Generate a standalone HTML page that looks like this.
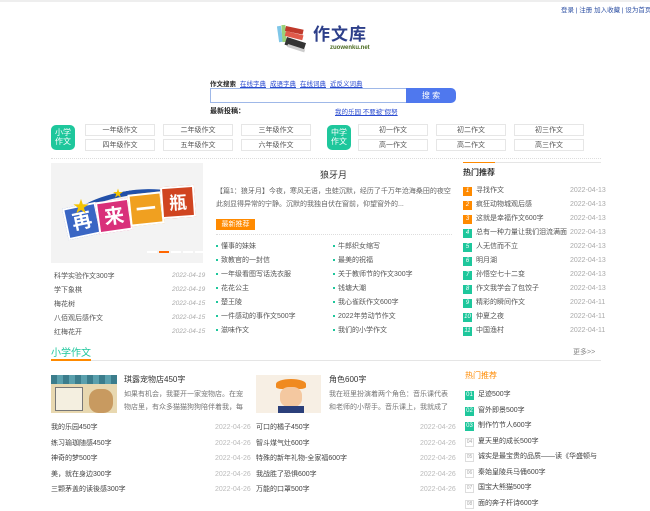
<!DOCTYPE html>
<html><head><meta charset="utf-8"><style>
*{margin:0;padding:0;box-sizing:border-box}
body{width:650px;height:500px;overflow:hidden;background:#fff;font-family:"Liberation Sans","Noto Sans CJK SC",sans-serif;font-size:7px;color:#555;position:relative}
.a{position:absolute;white-space:nowrap}
.blue{color:#2c4fa3}
.lk{color:#2a4bd0;text-decoration:underline}
.box{position:absolute;width:70px;height:12px;border:1px solid #e6e6e6;text-align:center;line-height:11px;color:#555;font-size:7px}
.badge{position:absolute;width:24px;height:25px;background:#1ec79c;border-radius:5px;color:#fff;font-size:8px;line-height:9px;text-align:center;padding-top:3px}
.dot::before{content:"";display:inline-block;width:2px;height:2px;background:#1ec79c;margin-right:3px;vertical-align:middle}
.date{color:#aaa;font-style:italic}
.num{display:inline-block;width:9px;height:9px;color:#fff;font-size:6px;text-align:center;line-height:9px;margin-right:4px;font-style:italic}
.o{background:#ff8a00}.g{background:#1ec79c}
.wn{display:inline-block;width:9px;height:9px;border:1px solid #ddd;color:#aaa;font-size:5px;text-align:center;line-height:7px;margin-right:4px}
</style></head><body>
<div class="a" style="left:0;top:0;width:650px;height:2px;background:#eee"></div>
<div class="a blue" style="left:561px;top:4px;font-size:6.5px">登录 | 注册 加入收藏 | 设为首页</div>
<!-- logo -->
<svg class="a" style="left:277px;top:24px" width="36" height="30">
<rect x="1" y="2" width="4" height="16" fill="#7ec6e8" transform="rotate(-8 3 10)"/>
<rect x="5" y="1" width="4" height="17" fill="#9bd07a" transform="rotate(-4 7 10)"/>
<rect x="9" y="2" width="18" height="5" fill="#c0392b" transform="rotate(12 9 2)"/>
<rect x="9" y="7" width="18" height="5" fill="#e05a4a" transform="rotate(14 9 7)"/>
<rect x="10" y="13" width="20" height="8" fill="#333" transform="rotate(18 10 13)"/>
<rect x="11" y="20" width="18" height="3" fill="#ccc" transform="rotate(18 11 20)"/>
</svg>
<div class="a" style="left:313px;top:26px;font-size:17px;line-height:18px;font-weight:bold;color:#2d3f8a;letter-spacing:1px">作文库</div>
<div class="a" style="left:330px;top:45px;font-size:6px;line-height:7px;color:#4a6a20;font-weight:bold">zuowenku.net</div>
<!-- search -->
<div class="a" style="left:210px;top:78px;font-size:6.5px;color:#222;font-weight:bold">作文搜索</div>
<div class="a lk" style="left:240px;top:78px;font-size:6.5px">在线字典</div>
<div class="a lk" style="left:270px;top:78px;font-size:6.5px">成语字典</div>
<div class="a lk" style="left:300px;top:78px;font-size:6.5px">在线词典</div>
<div class="a lk" style="left:330px;top:78px;font-size:6.5px">近反义词典</div>
<div class="a" style="left:210px;top:88px;width:197px;height:15px;border:1px solid #9fb8e8"></div>
<div class="a" style="left:406px;top:88px;width:50px;height:15px;background:#4f78ee;border-radius:0 5px 5px 0;color:#fff;font-size:8px;text-align:center;line-height:15px">搜 索</div>
<div class="a" style="left:210px;top:106px;font-size:7px;color:#222;font-weight:bold">最新投稿：</div>
<div class="a lk" style="left:335px;top:106px;font-size:6.5px">我的乐园 不要被"假努</div>
<!-- categories -->
<div class="badge" style="left:51px;top:125px">小学<br>作文</div>
<div class="box" style="left:85px;top:124px">一年级作文</div>
<div class="box" style="left:163px;top:124px">二年级作文</div>
<div class="box" style="left:241px;top:124px">三年级作文</div>
<div class="box" style="left:85px;top:139px">四年级作文</div>
<div class="box" style="left:163px;top:139px">五年级作文</div>
<div class="box" style="left:241px;top:139px">六年级作文</div>
<div class="badge" style="left:327px;top:125px">中学<br>作文</div>
<div class="box" style="left:358px;top:124px">初一作文</div>
<div class="box" style="left:436px;top:124px">初二作文</div>
<div class="box" style="left:514px;top:124px">初三作文</div>
<div class="box" style="left:358px;top:139px">高一作文</div>
<div class="box" style="left:436px;top:139px">高二作文</div>
<div class="box" style="left:514px;top:139px">高三作文</div>
<div class="a" style="left:51px;top:158px;width:550px;border-top:1px dotted #ddd"></div>
<!-- slide -->
<div class="a" style="left:51px;top:163px;width:152px;height:100px;background:#f3f3f3;overflow:hidden">
<div class="a" style="left:15px;top:28px;width:125px;height:50px;border-radius:50%;border-top:5px solid #2250a8;transform:rotate(-10deg)"></div>
<div class="a" style="left:14px;top:42px;width:34px;height:32px;background:#3a66c4;color:#fff;font-size:20px;font-weight:bold;text-align:center;line-height:30px;transform:rotate(-12deg);border:2px solid #fff">再</div>
<div class="a" style="left:46px;top:37px;width:34px;height:32px;background:#d9307a;color:#fff;font-size:20px;font-weight:bold;text-align:center;line-height:30px;transform:rotate(-8deg);border:2px solid #fff">来</div>
<div class="a" style="left:78px;top:30px;width:34px;height:32px;background:#f0a020;color:#fff;font-size:20px;font-weight:bold;text-align:center;line-height:30px;transform:rotate(-6deg);border:2px solid #fff">一</div>
<div class="a" style="left:110px;top:23px;width:34px;height:32px;background:#d04420;color:#fff;font-size:18px;font-weight:bold;text-align:center;line-height:30px;transform:rotate(-4deg);border:2px solid #fff">瓶</div>
<div class="a" style="left:22px;top:30px;color:#f5c400;font-size:16px">★</div>
<div class="a" style="left:62px;top:22px;color:#f5c400;font-size:10px">★</div>
<div class="a" style="left:96px;top:88px;width:10px;height:2px;background:#fff"></div>
<div class="a" style="left:108px;top:88px;width:10px;height:2px;background:#f60"></div>
<div class="a" style="left:120px;top:88px;width:10px;height:2px;background:#fff"></div>
<div class="a" style="left:132px;top:88px;width:10px;height:2px;background:#fff"></div>
<div class="a" style="left:144px;top:88px;width:8px;height:2px;background:#fff"></div>
</div>
<div class="a" style="left:54px;top:270px;line-height:14px">科学实验作文300字<br>学下象棋<br>梅花树<br>八佰观后感作文<br>红梅花开</div>
<div class="a date" style="left:172px;top:269px;line-height:14px;font-size:6.5px">2022-04-19<br>2022-04-19<br>2022-04-15<br>2022-04-15<br>2022-04-15</div>
<!-- center -->
<div class="a" style="left:320px;top:168px;font-size:9px;color:#333">狼牙月</div>
<div class="a" style="left:216px;top:185px;line-height:13px;white-space:normal;width:240px;color:#666">【篇1：狼牙月】今夜，寒风无语，虫蛙沉默，经历了千万年沧海桑田的夜空此刻显得异常的宁静。沉默的我独自伏在窗前，仰望窗外的...</div>
<div class="a" style="left:216px;top:219px;width:39px;height:11px;background:#ff8a00;color:#fff;text-align:center;line-height:11px">最新推荐</div>
<div class="a" style="left:216px;top:234px;width:236px;border-top:1px dotted #ddd"></div>
<div class="a" style="left:216px;top:240px;line-height:14px"><div class="dot">懂事的妹妹</div><div class="dot">致教官的一封信</div><div class="dot">一年级看图写话洗衣服</div><div class="dot">花花公主</div><div class="dot">楚王陵</div><div class="dot">一件感动的事作文500字</div><div class="dot">滋味作文</div></div>
<div class="a" style="left:333px;top:240px;line-height:14px"><div class="dot">牛郎织女缩写</div><div class="dot">最美的祝福</div><div class="dot">关于教师节的作文300字</div><div class="dot">钱塘大潮</div><div class="dot">我心雀跃作文600字</div><div class="dot">2022年劳动节作文</div><div class="dot">我们的小学作文</div></div>
<!-- hot -->
<div class="a" style="left:463px;top:162px;width:138px;height:1px;background:#e5e5e5"></div>
<div class="a" style="left:463px;top:162px;width:32px;height:1px;background:#ff8a00"></div>
<div class="a" style="left:463px;top:167px;font-size:8px;color:#333;font-weight:bold">热门推荐</div>
<div class="a" style="left:463px;top:184px;line-height:14px">
<div><span class="num o">1</span>寻找作文</div><div><span class="num o">2</span>疯狂动物城观后感</div><div><span class="num o">3</span>这就是幸福作文600字</div><div><span class="num g">4</span>总有一种力量让我们泪流满面</div><div><span class="num g">5</span>人无信而不立</div><div><span class="num g">6</span>明月湖</div><div><span class="num g">7</span>孙悟空七十二变</div><div><span class="num g">8</span>作文我学会了包饺子</div><div><span class="num g">9</span>精彩的瞬间作文</div><div><span class="num g">10</span>仲夏之夜</div><div><span class="num g">11</span>中国渔村</div></div>
<div class="a" style="left:570px;top:184px;line-height:14px;color:#aaa">2022-04-13<br>2022-04-13<br>2022-04-13<br>2022-04-13<br>2022-04-13<br>2022-04-13<br>2022-04-13<br>2022-04-13<br>2022-04-11<br>2022-04-11<br>2022-04-11</div>
<!-- section -->
<div class="a" style="left:51px;top:344px;font-size:10px;color:#1ec79c">小学作文</div>
<div class="a" style="left:51px;top:360px;width:550px;height:1px;background:#e5e5e5"></div>
<div class="a" style="left:51px;top:359px;width:40px;height:2px;background:#ff8a00"></div>
<div class="a" style="left:573px;top:347px;color:#888">更多>></div>
<!-- card1 -->
<div class="a" style="left:51px;top:375px;width:66px;height:38px;background:#e8d8b0;overflow:hidden">
<div class="a" style="left:0;top:0;width:66px;height:9px;background:repeating-linear-gradient(90deg,#3b7d8c 0 6px,#5aa0ad 6px 12px)"></div>
<div class="a" style="left:4px;top:12px;width:28px;height:24px;background:#f4efe0;border:1px solid #777"></div>
<div class="a" style="left:38px;top:14px;width:24px;height:24px;background:#c89a60;border-radius:40%"></div>
</div>
<div class="a" style="left:124px;top:374px;font-size:8px;color:#333">琪露宠物店450字</div>
<div class="a" style="left:124px;top:388px;line-height:13px;color:#777;white-space:normal;width:122px">如果有机会，我要开一家宠物店。在宠物店里，有众多猫猫狗狗陪伴着我，每</div>
<div class="a" style="left:256px;top:375px;width:65px;height:38px;background:#f7efe4;overflow:hidden">
<div class="a" style="left:20px;top:4px;width:30px;height:10px;background:#f08a20;border-radius:50% 50% 20% 20%"></div>
<div class="a" style="left:24px;top:12px;width:22px;height:20px;background:#f4c8a0;border-radius:40%"></div>
<div class="a" style="left:22px;top:31px;width:26px;height:8px;background:#2b3f7a"></div>
</div>
<div class="a" style="left:329px;top:374px;font-size:8px;color:#333">角色600字</div>
<div class="a" style="left:329px;top:388px;line-height:13px;color:#777;white-space:normal;width:122px">我在班里扮演着两个角色：音乐课代表和老师的小帮手。音乐课上，我就成了</div>
<div class="a" style="left:51px;top:420px;line-height:15.6px;color:#444">我的乐园450字<br>练习瑜珈随感450字<br>神奇的梦500字<br>美，就在身边300字<br>三颗茅盖的读後感300字</div>
<div class="a" style="left:215px;top:420px;line-height:15.6px;color:#bbb">2022-04-26<br>2022-04-26<br>2022-04-26<br>2022-04-26<br>2022-04-26</div>
<div class="a" style="left:256px;top:420px;line-height:15.6px;color:#444">可口的橘子450字<br>智斗煤气灶600字<br>特殊的新年礼物-全家福600字<br>我战胜了恐惧600字<br>万能的口罩500字</div>
<div class="a" style="left:420px;top:420px;line-height:15.6px;color:#bbb">2022-04-26<br>2022-04-26<br>2022-04-26<br>2022-04-26<br>2022-04-26</div>
<div class="a" style="left:465px;top:370px;font-size:8px;color:#ff8a00">热门推荐</div>
<div class="a" style="left:465px;top:387px;line-height:15.5px;color:#444">
<div><span class="num g" style="font-style:normal">01</span>足迹500字</div><div><span class="num g" style="font-style:normal">02</span>窗外即景500字</div><div><span class="num g" style="font-style:normal">03</span>制作竹节人600字</div><div><span class="wn">04</span>夏天里的成长500字</div><div><span class="wn">05</span>诚实是最宝贵的品质——读《华盛顿与</div><div><span class="wn">06</span>秦始皇陵兵马俑600字</div><div><span class="wn">07</span>国宝大熊猫500字</div><div><span class="wn">08</span>面的奔子杆诗600字</div></div>
</body></html>
